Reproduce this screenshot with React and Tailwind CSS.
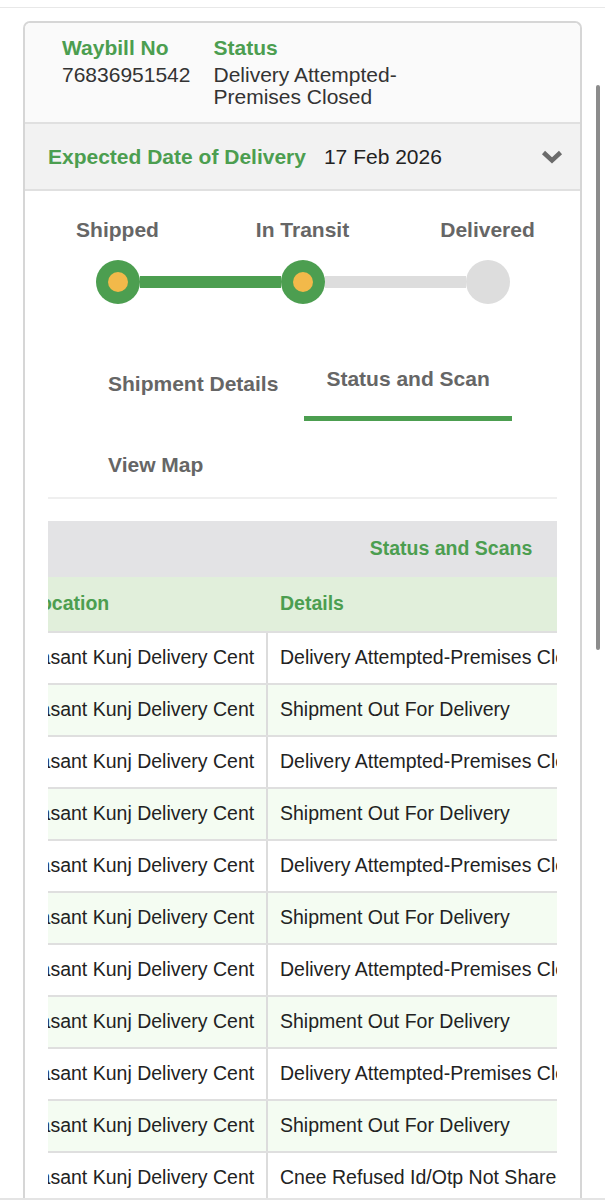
const GREEN = "text-[#4c9e50]";

const scans = [
  "Delivery Attempted-Premises Closed",
  "Shipment Out For Delivery",
  "Delivery Attempted-Premises Closed",
  "Shipment Out For Delivery",
  "Delivery Attempted-Premises Closed",
  "Shipment Out For Delivery",
  "Delivery Attempted-Premises Closed",
  "Shipment Out For Delivery",
  "Delivery Attempted-Premises Closed",
  "Shipment Out For Delivery",
  "Cnee Refused Id/Otp Not Shared",
];

const steps = [
  { label: "Shipped", done: true, left: "bg-transparent", right: "bg-[#4c9e50]" },
  { label: "In Transit", done: true, left: "bg-[#4c9e50]", right: "bg-[#dddddd]" },
  { label: "Delivered", done: false, left: "bg-[#dddddd]", right: "bg-transparent" },
];

function Step({ step }) {
  return (
    <div className="flex flex-col">
      <div className="text-center text-[21px] font-bold leading-[24px] text-[#666]">{step.label}</div>
      <div className="mt-[18px] flex items-center">
        <div className={`h-[12px] flex-1 ${step.left}`} />
        {step.done ? (
          <div className="flex h-[44px] w-[44px] items-center justify-center rounded-full bg-[#4c9e50]">
            <div className="h-[20px] w-[20px] rounded-full bg-[#f2b94a]" />
          </div>
        ) : (
          <div className="h-[44px] w-[44px] rounded-full bg-[#dddddd]" />
        )}
        <div className={`h-[12px] flex-1 ${step.right}`} />
      </div>
    </div>
  );
}

export default function App() {
  return (
    <div className="relative h-[1200px] overflow-hidden bg-white font-['Liberation_Sans',Arial,sans-serif]">
      <div className="h-[8px] border-b border-[#e8e8e8]" />

      <div className="mx-[23px] mt-[13px] rounded-t-[7px] border-2 border-b-0 border-[#d6d6d6]">
        {/* waybill + status */}
        <div className="flex gap-[23px] rounded-t-[6px] bg-[#fafafa] pb-[14px] pl-[37px] pt-[14px]">
          <div>
            <div className={`mb-[5px] text-[21px] font-bold leading-[22px] ${GREEN}`}>Waybill No</div>
            <div className="text-[21px] leading-[22px] text-[#333]">76836951542</div>
          </div>
          <div className="max-w-[230px]">
            <div className={`mb-[5px] text-[21px] font-bold leading-[22px] ${GREEN}`}>Status</div>
            <div className="text-[21px] leading-[22px] text-[#333]">Delivery Attempted-Premises Closed</div>
          </div>
        </div>

        {/* expected date */}
        <div className="flex h-[69px] items-center border-y-2 border-[#e0e0e0] bg-[#f2f2f2] pl-[23px] pr-[17px]">
          <span className={`text-[21px] font-bold leading-[24px] ${GREEN}`}>Expected Date of Delivery</span>
          <span className="ml-[18px] text-[21px] font-medium leading-[24px] text-[#222]">17 Feb 2026</span>
          <svg className="ml-auto" width="22" height="14" viewBox="0 0 22 14">
            <polyline points="2.5,2.5 11,10.5 19.5,2.5" fill="none" stroke="#6b6b6b" strokeWidth="4.5" />
          </svg>
        </div>

        {/* progress */}
        <div className="grid grid-cols-3 pt-[27px]">
          {steps.map((s) => (
            <Step key={s.label} step={s} />
          ))}
        </div>

        {/* tabs */}
        <div className="mx-[23px] mt-[46px] border-b-2 border-[#efefef]">
          <div className="flex flex-wrap items-end gap-x-[4px] gap-y-[15px] pl-[38px] text-[21px] font-bold leading-[24px] text-[#666]">
            <div className="px-[22px] pb-[25px] pt-[17px]">Shipment Details</div>
            <div className="border-b-[5px] border-[#4c9e50] px-[22px] pb-[25px] pt-[17px]">Status and Scan</div>
            <div className="px-[22px] pb-[20px] pt-[17px]">View Map</div>
          </div>
        </div>

        {/* scans table */}
        <div className="mx-[23px] mt-[22px] overflow-hidden">
          <div className="-ml-[32px] w-[870px] text-[19.5px]">
            <div className={`flex h-[56px] items-center justify-center bg-[#e3e3e5] font-bold ${GREEN}`}>
              Status and Scans
            </div>
            <div className={`flex h-[54px] items-center bg-[#e1efdb] font-bold ${GREEN}`}>
              <div className="w-[252px] pl-[12px]">Location</div>
              <div className="pl-[12px]">Details</div>
            </div>
            {scans.map((d, i) => (
              <div
                key={i}
                className={`flex h-[52px] items-stretch border-t-2 border-[#dfdfdf] text-[#222] ${
                  i % 2 === 1 ? "bg-[#f4fcf2]" : "bg-white"
                }`}
              >
                <div className="flex w-[252px] shrink-0 items-center overflow-hidden whitespace-nowrap border-r-2 border-[#dcdcdc] pl-[12px]">
                  Vasant Kunj Delivery Cent
                </div>
                <div className="flex items-center whitespace-nowrap pl-[12px]">{d}</div>
              </div>
            ))}
          </div>
        </div>
      </div>

      {/* scroll indicator */}
      <div className="absolute left-[596px] top-[85px] h-[565px] w-[4px] rounded-full bg-[#8c8c8c]" />
      <div className="absolute bottom-0 left-0 right-0 h-[2px] bg-[#e4e4e4]" />
    </div>
  );
}
